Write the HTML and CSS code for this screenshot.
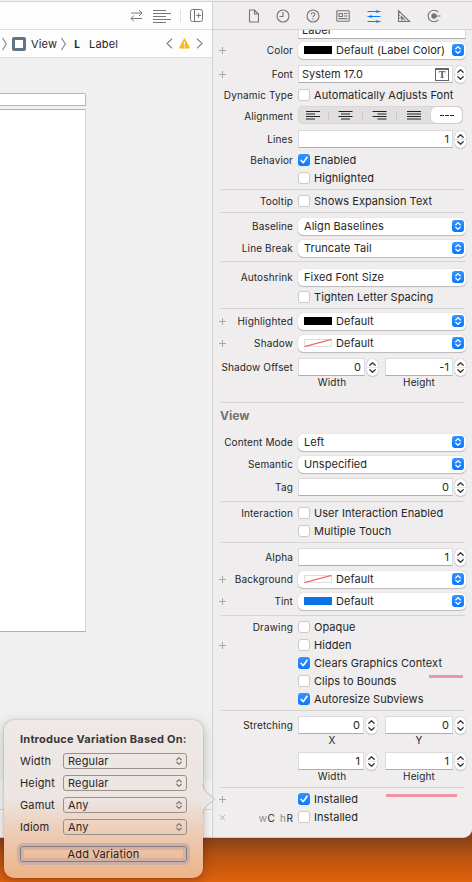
FILE: index.html
```html
<!DOCTYPE html>
<html lang="en">
<head>
<meta charset="utf-8">
<title>Attributes Inspector</title>
<link rel="stylesheet" href="styles.css">
</head>
<body>
<svg class="defs" width="0" height="0">
  <symbol id="updown" viewBox="0 0 12 12"><path d="M3.8 4.7 6 2.6 8.2 4.7M3.8 7.3 6 9.4 8.2 7.3" fill="none" stroke="currentColor" stroke-width="1.3" stroke-linecap="round" stroke-linejoin="round"/></symbol>
  <symbol id="step" viewBox="0 0 12 18"><path d="M0 9H12" stroke="#e2e0e1"/><path d="M3.1 6.5 6 3.8 8.9 6.5M3.1 11.5 6 14.2 8.9 11.5" fill="none" stroke="#3a3a3a" stroke-width="1.5" stroke-linecap="round" stroke-linejoin="round"/></symbol>
  <symbol id="plus" viewBox="0 0 9 9"><path d="M4.5 1V8M1 4.5H8" stroke="#a9a7a8" fill="none"/></symbol>
  <symbol id="tick" viewBox="0 0 12 12"><path d="M3 6.3 5.2 8.7 9 3.3" fill="none" stroke="#fff" stroke-width="1.6" stroke-linecap="round" stroke-linejoin="round"/></symbol>
  <symbol id="none" viewBox="0 0 28 8"><path d="M.5.5H27.5V7.5H.5Z" fill="#fff" stroke="#dedede"/><path d="M.5 7.6 27.5.4" stroke="#f4625a" stroke-width="1.2"/></symbol>
</svg>
<div class="window">
  <main class="editor">
    <div class="toolbar">
      <svg width="13" height="13" viewBox="0 0 13 13" class="line"><path d="M1 4H12M9 1 12 4 9 7M12 9.5H1M4 6.5 1 9.5 4 12.5"/></svg>
      <svg width="18" height="14" viewBox="0 0 18 14" class="line"><path d="M0 1.5H13M0 4.5H18M0 7.5H13M0 10.500H18M0 13.5H13"/></svg>
      <i class="divider"></i>
      <svg width="13" height="13" viewBox="0 0 13 13" class="line"><rect x=".5" y=".5" width="12" height="12" rx="2"/><path d="M4.500.5V12.500M6.300 6.500H11M8.600 4.200V8.800"/></svg>
    </div>
    <div class="jumpbar">
      <svg class="chev" width="5" height="14" viewBox="0 0 5 14"><path d="M.5 1 4.300 7 .5 13"/></svg>
      <i class="view-icon"></i><span class="view-name">View</span>
      <svg class="chev" width="5" height="14" viewBox="0 0 5 14"><path d="M.5 1 4.300 7 .5 13"/></svg>
      <b class="l-icon">L</b><span class="label-name">Label</span>
      <svg class="chev nav" width="7" height="11" viewBox="0 0 7 11"><path d="M6 .8 1 5.500 6 10.200"/></svg>
      <svg width="11" height="11" viewBox="0 0 11 11"><path d="M5.500 1 10.200 9.900H.8Z" fill="#fdb813" stroke="#fdb813" stroke-width="1.300" stroke-linejoin="round"/><path d="M5.500 3.500V6.800M5.500 8V9.200" stroke="#fff" stroke-width="1.200"/></svg>
      <svg class="chev" width="7" height="11" viewBox="0 0 7 11"><path d="M1 .8 6 5.500 1 10.200"/></svg>
    </div>
    <div class="canvas"><div class="scene-title"></div><div class="scene"></div></div>
    <div class="device-bar"></div>
    <div class="bottom-bar"></div>
  </main>
  <aside class="inspector">
    <nav class="tabs">
      <svg width="12" height="14" viewBox="0 0 12 14"><path d="M1.500 1H6.500L10.500 5V13H1.500ZM6.500 1V5H10.500"/></svg>
      <svg width="14" height="14" viewBox="0 0 14 14"><circle cx="7" cy="7" r="6"/><path d="M7 3V7.500H3.500"/></svg>
      <svg width="14" height="14" viewBox="0 0 14 14"><circle cx="7" cy="7" r="6"/><path d="M5.200 5.400C5.200 3.200 8.900 3.300 8.900 5.300 8.900 6.600 7 6.600 7 8.200M7 9.500V10.700"/></svg>
      <svg width="14" height="14" viewBox="0 0 14 14"><rect x=".8" y="1.800" width="12.400" height="10.400" rx=".8"/><path d="M3 4.500H6.500V7.500H3ZM8 4.500H11.500M8 7H11.500M2.500 9.600H11.500"/></svg>
      <svg class="active" width="14" height="14" viewBox="0 0 14 14"><path d="M.5 2.500H13.500M.5 7.500H13.500M.5 12.500H13.500"/><path class="solid" d="M9.500.8 12.500 2.500 9.500 4.200ZM4.500 5.800 1.500 7.500 4.500 9.200ZM9.500 10.800 12.500 12.500 9.500 14.200Z"/></svg>
      <svg width="14" height="14" viewBox="0 0 14 14"><path d="M1.500 1.500V12.500H12.500ZM4.200 7.500V10H7ZM1.500 4H3M1.500 6.500H3M1.500 9H3M5 12.500V11M8 12.500V11"/></svg>
      <svg width="14" height="14" viewBox="0 0 14 14"><path d="M11.300 3.200A5.800 5.800 0 1 0 11.300 10.800M7 7H13.500"/><circle class="solid" cx="7" cy="7" r="2.700"/></svg>
    </nav>
    <div class="form">
      <div class="row clipped"><div class="lead"></div><div class="field text-only">Label</div></div>
      <div class="row pop"><div class="lead"><svg class="plus"><use href="#plus"/></svg><span>Color</span></div><div class="select"><i class="swatch black"></i>Default (Label Color)<svg class="knob"><use href="#updown"/></svg></div></div>
      <div class="row font"><div class="lead"><svg class="plus"><use href="#plus"/></svg><span>Font</span></div><div class="field left">System 17.0<span class="t-icon">T</span></div><svg class="stepper"><use href="#step"/></svg></div>
      <div class="row dyn"><div class="lead"><span>Dynamic Type</span></div><i class="check"></i><span class="text">Automatically Adjusts Font</span></div>
      <div class="row num"><div class="lead low"><span>Alignment</span></div>
        <div class="segments">
          <svg viewBox="0 0 14 9"><path d="M0 .5H14M0 3H9M0 5.500H14M0 8H9"/></svg>
          <svg viewBox="0 0 14 9"><path d="M0 .5H14M2.500 3H11.500M0 5.500H14M2.500 8H11.500"/></svg>
          <svg viewBox="0 0 14 9"><path d="M0 .5H14M5 3H14M0 5.500H14M5 8H14"/></svg>
          <svg viewBox="0 0 14 9"><path d="M0 .5H14M0 3H14M0 5.500H14M0 8H14"/></svg>
          <span class="on"><svg viewBox="0 0 14 9"><path d="M0 4.500H4M5 4.500H9M10 4.500H14"/></svg></span>
        </div></div>
      <div class="row num"><div class="lead"><span>Lines</span></div><div class="field">1</div><svg class="stepper"><use href="#step"/></svg></div>
      <div class="row"><div class="lead"><span>Behavior</span></div><i class="check on"><svg><use href="#tick"/></svg></i><span class="text">Enabled</span></div>
      <div class="row"><div class="lead"></div><i class="check"></i><span class="text">Highlighted</span></div>
      <hr>
      <div class="row"><div class="lead"><span>Tooltip</span></div><i class="check"></i><span class="text">Shows Expansion Text</span></div>
      <hr>
      <div class="row pop"><div class="lead"><span>Baseline</span></div><div class="select">Align Baselines<svg class="knob"><use href="#updown"/></svg></div></div>
      <div class="row pop"><div class="lead"><span>Line Break</span></div><div class="select">Truncate Tail<svg class="knob"><use href="#updown"/></svg></div></div>
      <hr class="roomy">
      <div class="row pop"><div class="lead"><span>Autoshrink</span></div><div class="select">Fixed Font Size<svg class="knob"><use href="#updown"/></svg></div></div>
      <div class="row"><div class="lead"></div><i class="check"></i><span class="text">Tighten Letter Spacing</span></div>
      <hr class="tight">
      <div class="row pop"><div class="lead"><svg class="plus"><use href="#plus"/></svg><span>Highlighted</span></div><div class="select"><i class="swatch black"></i>Default<svg class="knob"><use href="#updown"/></svg></div></div>
      <div class="row pop"><div class="lead"><svg class="plus"><use href="#plus"/></svg><span>Shadow</span></div><div class="select"><svg class="swatch"><use href="#none"/></svg>Default<svg class="knob"><use href="#updown"/></svg></div></div>
      <div class="row pair"><div class="lead"><span>Shadow Offset</span></div>
        <div class="cell"><div class="cell-row"><div class="field">0</div><svg class="stepper"><use href="#step"/></svg></div><div class="caption">Width</div></div>
        <div class="cell"><div class="cell-row"><div class="field">-1</div><svg class="stepper"><use href="#step"/></svg></div><div class="caption">Height</div></div></div>
      <hr class="heading-rule">
      <h2>View</h2>
      <div class="row pop"><div class="lead"><span>Content Mode</span></div><div class="select">Left<svg class="knob"><use href="#updown"/></svg></div></div>
      <div class="row pop"><div class="lead"><span>Semantic</span></div><div class="select">Unspecified<svg class="knob"><use href="#updown"/></svg></div></div>
      <div class="row num"><div class="lead"><span>Tag</span></div><div class="field">0</div><svg class="stepper"><use href="#step"/></svg></div>
      <hr>
      <div class="row"><div class="lead"><span>Interaction</span></div><i class="check"></i><span class="text">User Interaction Enabled</span></div>
      <div class="row"><div class="lead"></div><i class="check"></i><span class="text">Multiple Touch</span></div>
      <hr class="medium">
      <div class="row pop"><div class="lead"><span>Alpha</span></div><div class="field">1</div><svg class="stepper"><use href="#step"/></svg></div>
      <div class="row pop"><div class="lead"><svg class="plus"><use href="#plus"/></svg><span>Background</span></div><div class="select"><svg class="swatch"><use href="#none"/></svg>Default<svg class="knob"><use href="#updown"/></svg></div></div>
      <div class="row pop"><div class="lead"><svg class="plus"><use href="#plus"/></svg><span>Tint</span></div><div class="select"><i class="swatch blue"></i>Default<svg class="knob"><use href="#updown"/></svg></div></div>
      <hr class="after-pop">
      <div class="row"><div class="lead"><span>Drawing</span></div><i class="check"></i><span class="text">Opaque</span></div>
      <div class="row"><div class="lead"><svg class="plus"><use href="#plus"/></svg></div><i class="check"></i><span class="text">Hidden</span></div>
      <div class="row"><div class="lead"></div><i class="check on"><svg><use href="#tick"/></svg></i><span class="text">Clears Graphics Context</span></div>
      <div class="row"><div class="lead"></div><i class="check"></i><span class="text">Clips to Bounds</span><i class="mark short"></i></div>
      <div class="row"><div class="lead"></div><i class="check on"><svg><use href="#tick"/></svg></i><span class="text">Autoresize Subviews</span></div>
      <hr>
      <div class="row pair stretch"><div class="lead"><span>Stretching</span></div>
        <div class="cell"><div class="cell-row"><div class="field">0</div><svg class="stepper"><use href="#step"/></svg></div><div class="caption">X</div></div>
        <div class="cell"><div class="cell-row"><div class="field">0</div><svg class="stepper"><use href="#step"/></svg></div><div class="caption">Y</div></div></div>
      <div class="row pair stretch"><div class="lead"></div>
        <div class="cell"><div class="cell-row"><div class="field">1</div><svg class="stepper"><use href="#step"/></svg></div><div class="caption">Width</div></div>
        <div class="cell"><div class="cell-row"><div class="field">1</div><svg class="stepper"><use href="#step"/></svg></div><div class="caption">Height</div></div></div>
      <hr>
      <div class="row"><div class="lead"><svg class="plus"><use href="#plus"/></svg></div><i class="check on"><svg><use href="#tick"/></svg></i><span class="text">Installed</span><i class="mark long"></i></div>
      <div class="row"><div class="lead low"><svg class="plus cross"><use href="#plus"/></svg><span class="traits"><em>w</em>C <em>h</em>R</span></div><i class="check"></i><span class="text">Installed</span></div>
    </div>
  </aside>
</div>
<section class="popover">
  <svg class="arrow" width="14" height="32" viewBox="0 0 14 32"><path d="M0 1C0 6 3 8 6 10.500L12 15.400Q13 16.200 12 17L6 22C3 24.500 0 26.500 0 31Z" fill="#ece6e3"/><path d="M1 1C1 6 3 8 6 10.500L12 15.400Q13 16.200 12 17L6 22C3 24.500 1 26.500 1 31" fill="none" stroke="#b8b4b3" stroke-width=".8"/></svg>
  <h3>Introduce Variation Based On:</h3>
  <div class="opt"><span>Width</span><div class="menu">Regular<svg><use href="#updown"/></svg></div></div>
  <div class="opt"><span>Height</span><div class="menu">Regular<svg><use href="#updown"/></svg></div></div>
  <div class="opt"><span>Gamut</span><div class="menu">Any<svg><use href="#updown"/></svg></div></div>
  <div class="opt"><span>Idiom</span><div class="menu">Any<svg><use href="#updown"/></svg></div></div>
  <button>Add Variation</button>
</section>
</body>
</html>
```
FILE: styles.css
```css
* { box-sizing: border-box; }
body {
  margin: 0;
  width: 472px;
  height: 882px;
  overflow: hidden;
  position: relative;
  font: 11px/14px Inter, "Liberation Sans", sans-serif;
  letter-spacing: 0.06px;
  color: #262626;
  background: linear-gradient(#86401a 838px, #b5520f 855px, #e2620c 882px);
}
svg { display: block; flex: none; }
.defs { position: absolute; }
.window {
  height: 838px;
  display: flex;
  overflow: hidden;
  background: #f0f0f0;
  border-top: 1px solid #f0eeef;
  border-bottom: 1px solid #d0c8c6;
  border-bottom-right-radius: 9px;
}

/* Editor */
.editor {
  width: 213px;
  border-right: 1px solid #d3d2d2;
  display: flex;
  flex-direction: column;
}
.toolbar {
  height: 29px;
  border-top: 1px solid #d6d6d6;
  border-bottom: 1px solid #dedede;
  background: #fdfdfd;
  display: flex;
  align-items: center;
  justify-content: flex-end;
  padding-right: 9px;
}
.toolbar svg + svg { margin-left: 10px; }
.line { fill: none; stroke: #777; stroke-width: 1; }
.divider { width: 1px; height: 12px; background: #ddd; margin: 0 9px; }
.jumpbar {
  height: 28px;
  border-bottom: 1px solid #dedede;
  background: #fdfdfd;
  display: flex;
  align-items: center;
  padding: 0 9px 0 2px;
}
.chev { fill: none; stroke: #8a8a8a; stroke-width: 1.2; }
.view-icon { width: 14px; height: 14px; margin: 0 5px; border: 3px solid #5f7688; border-radius: 2px; background: #fff; }
.view-name { margin-right: 4px; letter-spacing: 0.15px; }
.label-name { letter-spacing: 0.15px; }
.l-icon { width: 14px; text-align: center; margin: 0 5px 0 4px; font-size: 10px; }
.nav { margin-left: auto; }
.nav + svg { margin: 0 6px; }
.canvas { flex: 1; padding-top: 35px; }
.scene-title {
  width: 86px;
  height: 13px;
  background: #fff;
  border: 1px solid #b5b5b5;
  border-left: 0;
  border-top-right-radius: 2px;
}
.scene {
  width: 86px;
  height: 523px;
  margin-top: 3px;
  background: #fff;
  border: 1px solid #b0b0b0;
  border-right-color: #d5d5d5;
  border-left: 0;
}
.device-bar { height: 29px; background: #f7f7f7; }
.bottom-bar { height: 28px; border-top: 1px solid #d9d9d9; background: #f7f7f7; }

/* Inspector */
.inspector { flex: 1; background: #efedee; }
.tabs {
  height: 29px;
  border-top: 1px solid #d3d2d2;
  border-bottom: 1px solid #d6d4d5;
  display: flex;
  align-items: center;
  justify-content: space-between;
  padding: 0 31px 0 35px;
}
.tabs svg { fill: none; stroke: #757374; stroke-width: 1.1; overflow: visible; }
.tabs .solid { fill: #757374; stroke: none; }
.tabs .active { stroke: #0a7cff; }
.tabs .active .solid { fill: #0a7cff; }
.row { height: 18px; display: flex; align-items: center; padding-right: 6px; }
.lead {
  width: 80px;
  margin-right: 5px;
  padding-left: 5px;
  flex: none;
  display: flex;
  align-items: center;
  justify-content: space-between;
  font-size: 10px;
  letter-spacing: 0.14px;
  white-space: nowrap;
  color: #262626;
}
.lead span { margin-left: auto; }
.low span { padding-top: 1px; }
.plus { width: 9px; height: 9px; }
.cross { transform: rotate(45deg) scale(0.9); }
.lead .traits { letter-spacing: 0.6px; word-spacing: 1px; margin-right: -0.5px; }
.traits em { font-style: normal; color: #8d8b8c; }
.pop { height: 22px; }
.num { height: 24px; }
.font { height: 26px; }
.dyn { height: 16px; }
.clipped { height: 9px; overflow: hidden; align-items: flex-end; }
.select {
  flex: 1;
  height: 17px;
  padding: 0 2px 0 6px;
  display: flex;
  align-items: center;
  background: #fff;
  border-radius: 5px;
  box-shadow: 0 0 1px #0004, 0 1px 1px #0003;
}
.knob {
  width: 12px;
  height: 12px;
  margin-left: auto;
  color: #fff;
  background: linear-gradient(#3494ff, #0878fb);
  border-radius: 3px;
}
.swatch { width: 28px; height: 8px; margin-right: 4px; }
.black { background: #000; }
.blue { background: #0a74e4; }
.field {
  flex: 1;
  height: 18px;
  padding: 0 3px;
  display: flex;
  align-items: center;
  justify-content: flex-end;
  background: #fff;
  border: 1px solid #dcdadb;
  border-bottom-color: #aeacad;
}
.left { justify-content: space-between; padding: 0 3px; letter-spacing: 0; }
.text-only { justify-content: flex-start; padding: 0 3px; }
.t-icon {
  width: 14px;
  height: 13px;
  border: 1px solid #666;
  border-top-width: 2px;
  font: bold 10px/10px "Liberation Serif", serif;
  letter-spacing: 0;
  text-align: center;
  color: #555;
}
.stepper {
  width: 11px;
  height: 17px;
  margin-left: 2px;
  border-radius: 5px;
  background: #fff;
  box-shadow: 0 0 1px #0006, 0 1px 1px #0002;
}
.check {
  flex: none;
  width: 12px;
  height: 12px;
  margin-right: 4px;
  border: 1px solid #cbc9ca;
  border-radius: 3px;
  background: #fff;
}
.check.on { border: 0; background: linear-gradient(#3494ff, #0878fb); }
.check svg { width: 12px; height: 12px; }
.segments {
  width: 165px;
  height: 18px;
  display: grid;
  grid-template-columns: 31px repeat(3, 34px) 1fr;
  align-items: center;
  background: #e1dfe0;
  border-radius: 5px;
  box-shadow: inset 0 0 0 1px #d8d6d7;
}
.segments svg { width: 14px; height: 9px; fill: none; stroke: #222; }
.segments > svg { width: 100%; border-right: 1px solid #cccacb; }
.segments > svg:nth-child(4) { border-right: 0; }
.segments .on {
  width: 31px;
  height: 16px;
  display: grid;
  place-items: center;
  background: #fff;
  border-radius: 5px;
  box-shadow: 0 0 1px #0005;
}
.pair { height: 35px; padding-top: 4px; align-items: flex-start; }
.pair .lead { height: 18px; }
.pair .cell { width: 80px; }
.pair .cell + .cell { width: 81px; margin-left: 7px; }
.cell-row { display: flex; align-items: center; }
.caption { width: 68px; height: 13px; line-height: 12px; text-align: center; font-size: 10px; letter-spacing: 0.14px; }
.stretch { height: 36px; padding-top: 3px; }
.stretch .cell:nth-child(2) { width: 79px; margin-right: 1px; }
hr {
  height: 1px;
  margin: 2px 7px 2px 8px;
  border: 0;
  background: #d5d3d4;
}
.roomy { margin-bottom: 4px; }
.tight { margin-bottom: 1px; }
.medium { margin-bottom: 3px; }
.after-pop { margin-top: 3px; }
.heading-rule { margin-top: 13px; margin-bottom: 0; }
h2 {
  margin: 0 0 3px;
  height: 25px;
  padding-left: 7px;
  font-size: 12px;
  line-height: 26px;
  letter-spacing: 0;
  color: #737172;
}
.mark { height: 3px; background: #f095a6; }
.short { width: 34px; margin: -10px 3px 0 auto; }
.long { width: 71px; margin: -7px 9px 0 auto; }

/* Variation popover */
.popover {
  position: absolute;
  left: 4px;
  top: 720px;
  width: 199px;
  height: 158px;
  padding: 12px 16px 0;
  letter-spacing: 0.15px;
  border-radius: 10px;
  background: linear-gradient(#eee8e6 0, #ece5e2 50%, #edcdb8 70%, #eeb287 100%);
  box-shadow: 0 0 1px #0008, 0 3px 12px #0004;
}
.arrow { position: absolute; left: 198px; top: 63px; }
h3 { margin: 0 0 4px; font-size: 11px; line-height: 14px; letter-spacing: 0.22px; white-space: nowrap; color: #3b3736; }
.opt { height: 22px; display: flex; align-items: center; }
.opt > span { width: 43px; }
.menu {
  flex: 1;
  height: 16px;
  padding: 0 1px 0 4px;
  display: flex;
  align-items: center;
  justify-content: space-between;
  border: 1px solid #9b918c;
  border-radius: 3px;
}
.menu svg { width: 12px; height: 12px; color: #84796f; }
button {
  display: block;
  width: 167px;
  height: 16px;
  margin-top: 8px;
  padding: 0;
  font: inherit;
  letter-spacing: inherit;
  color: #222;
  background: transparent;
  border: 1px solid #85797a;
  border-radius: 3px;
  box-shadow: 0 0 0 3px #c9b0ab, inset 0 0 0 3px #d3b2a4;
}
```
